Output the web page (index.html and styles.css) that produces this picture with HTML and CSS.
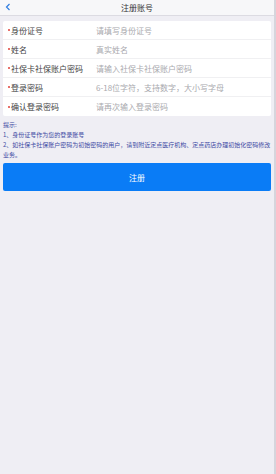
FILE: index.html
```html
<!DOCTYPE html>
<html lang="zh-CN">
<head>
  <meta charset="UTF-8">
  <meta name="viewport" content="width=device-width, initial-scale=1.0">
  <title>注册账号</title>
  <link rel="stylesheet" href="styles.css">
</head>
<body>
  <div class="page">
    <header class="topbar">
      <svg class="back" width="6" height="8" viewBox="0 0 6 8">
        <path d="M4.5 1 L1.5 4 L4.5 7" fill="none" stroke="#2f7de1" stroke-width="1.2"/>
      </svg>
      <span class="title">注册账号</span>
    </header>

    <div class="content">
      <form class="card" id="regForm">
        <div class="row"><label class="label"><i class="dot"></i>身份证号</label><span class="field">请填写身份证号</span></div>
        <div class="row"><label class="label"><i class="dot"></i>姓名</label><span class="field">真实姓名</span></div>
        <div class="row"><label class="label"><i class="dot"></i>社保卡社保账户密码</label><span class="field">请输入社保卡社保账户密码</span></div>
        <div class="row"><label class="label"><i class="dot"></i>登录密码</label><span class="field">6-18位字符，支持数字，大小写字母</span></div>
        <div class="row"><label class="label"><i class="dot"></i>确认登录密码</label><span class="field">请再次输入登录密码</span></div>
      </form>

      <div class="tips">
        <p>提示:</p>
        <p>1、身份证号作为您的登录账号</p>
        <p>2、如社保卡社保账户密码为初始密码的用户，请到附近定点医疗机构、定点药店办理初始化密码修改业务。</p>
      </div>

      <button class="submit" type="button">注册</button>
    </div>
  </div>
</body>
</html>
```

FILE: styles.css
```css
html, body {
  margin: 0;
  padding: 0;
  height: 100%;
}
body {
  font-family: "Noto Sans CJK SC", "Liberation Sans", sans-serif;
  background-color: #efeef4;
}
.page {
  min-height: 100%;
  border-right: 2px solid #d6d5dc;
  box-sizing: border-box;
}
.topbar {
  height: 15px;
  background: #f7f7f9;
  border-bottom: 1px solid #dcdbe2;
  display: flex;
  align-items: center;
  justify-content: center;
  position: relative;
}
.back {
  position: absolute;
  left: 5px;
  top: 3px;
}
.title {
  font-size: 8px;
  color: #333;
  line-height: 15px;
}
.content {
  padding: 5px 3px 0 3px;
}
.card {
  background: #fff;
  border-radius: 2px;
  margin: 0;
}
.row {
  height: 19px;
  display: flex;
  align-items: center;
  border-bottom: 1px solid #f0f0f2;
  box-sizing: border-box;
  font-size: 8px;
}
.row:last-child {
  border-bottom: none;
}
.label {
  width: 93px;
  padding-left: 5px;
  box-sizing: border-box;
  color: #444;
  display: flex;
  align-items: center;
}
.dot {
  width: 2px;
  height: 2px;
  border-radius: 50%;
  background: #e0403a;
  margin-right: 1px;
}
.field {
  color: #a9a9ae;
}
.tips {
  margin-top: 4px;
  color: #3d4aa3;
  font-size: 6px;
  line-height: 10px;
}
.tips p {
  margin: 0;
}
.submit {
  display: block;
  width: 100%;
  margin-top: 3px;
  height: 28px;
  border: none;
  border-radius: 2px;
  background-color: #0a7cf6;
  color: #fff;
  font-family: inherit;
  font-size: 8px;
}
```
